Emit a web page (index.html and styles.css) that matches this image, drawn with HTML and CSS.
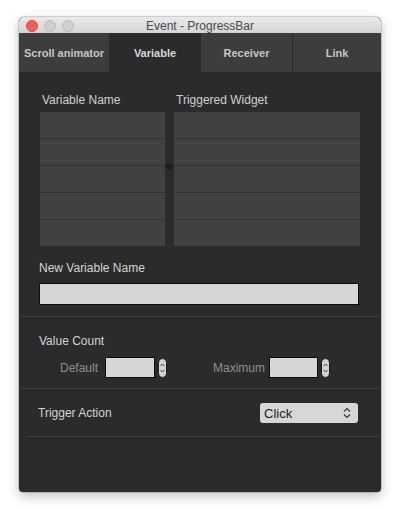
FILE: index.html
```html
<!DOCTYPE html>
<html>
<head>
<meta charset="utf-8">
<link rel="stylesheet" href="styles.css">
</head>
<body>
<div class="window">
  <div class="titlebar">
    <div class="lights">
      <span class="light light-close"></span>
      <span class="light"></span>
      <span class="light"></span>
    </div>
    <div class="title">Event - ProgressBar</div>
    <div></div>
  </div>
  <div class="tabs">
    <div class="tab">Scroll animator</div>
    <div class="tab tab-active">Variable</div>
    <div class="tab">Receiver</div>
    <div class="tab tab-link">Link</div>
  </div>
  <div class="panel">
    <div class="table-section">
      <div class="table">
        <div class="col">
          <div class="col-head">Variable Name</div>
          <div class="cells">
            <div class="cell"></div><div class="cell"></div><div class="cell"></div><div class="cell"></div><div class="cell"></div>
          </div>
        </div>
        <div class="col">
          <div class="col-head">Triggered Widget</div>
          <div class="cells">
            <div class="cell"></div><div class="cell"></div><div class="cell"></div><div class="cell"></div><div class="cell"></div>
          </div>
        </div>
        <span class="knob"></span>
      </div>
    </div>
    <div class="newvar-section">
      <div class="label">New Variable Name</div>
      <div class="text-input"></div>
    </div>
    <div class="value-section">
      <div class="label">Value Count</div>
      <div class="value-row">
        <span class="sub-label lbl-default">Default</span>
        <span class="num-input"></span>
        <svg class="stepper" viewBox="0 0 9 20" width="9" height="20"><rect x="0.5" y="0.5" width="8" height="19" rx="4" fill="#d2d2d2" stroke="#1a1a1a"/><path d="M2.5 8 L4.5 6 L6.5 8 M2.5 12 L4.5 14 L6.5 12" fill="none" stroke="#333" stroke-width="1"/></svg>
        <span class="sub-label lbl-max">Maximum</span>
        <span class="num-input num-input-max"></span>
        <svg class="stepper" viewBox="0 0 9 20" width="9" height="20"><rect x="0.5" y="0.5" width="8" height="19" rx="4" fill="#d2d2d2" stroke="#1a1a1a"/><path d="M2.5 8 L4.5 6 L6.5 8 M2.5 12 L4.5 14 L6.5 12" fill="none" stroke="#333" stroke-width="1"/></svg>
      </div>
    </div>
    <div class="trigger-section">
      <div class="label">Trigger Action</div>
      <div class="select">
        <span class="select-text">Click</span>
        <svg class="select-arrows" viewBox="0 0 8 12" width="8" height="12"><path d="M1 4.5 L4 1.5 L7 4.5 M1 7.5 L4 10.5 L7 7.5" fill="none" stroke="#333" stroke-width="1.1"/></svg>
      </div>
    </div>
  </div>
</div>
</body>
</html>
```
FILE: styles.css
```css
* { box-sizing: border-box; }
html, body { margin: 0; padding: 0; background: #ffffff; }
body {
  font-family: "Liberation Sans", Helvetica, Arial, sans-serif;
  width: 400px;
  height: 510px;
  overflow: hidden;
}
.window {
  margin: 17px 0 0 19px;
  width: 362px;
  height: 475px;
  background: #2b2b2b;
  border-radius: 5px 5px 4px 4px;
  box-shadow: 0 0 0 0.5px rgba(0,0,0,0.3), 0 4px 12px rgba(0,0,0,0.25);
  display: flex;
  flex-direction: column;
  overflow: hidden;
}
.titlebar {
  height: 16px;
  background: linear-gradient(#ebe9eb, #d6d4d6);
  display: grid;
  grid-template-columns: 1fr auto 1fr;
  align-items: center;
}
.lights {
  display: flex;
  gap: 6px;
  padding-left: 7px;
}
.light {
  width: 12px;
  height: 12px;
  border-radius: 50%;
  background: #d1d0d1;
  border: 0.5px solid #b9b8b9;
}
.light-close {
  background: #fc5f57;
  border-color: #de4841;
}
.title {
  font-size: 12px;
  line-height: 16px;
  color: #4a4a4a;
  padding-top: 1px;
}
.tabs {
  height: 39px;
  display: grid;
  grid-template-columns: 90px 92px 91px 1fr;
  background: #3d3d3d;
}
.tab {
  display: flex;
  align-items: center;
  justify-content: center;
  font-size: 11px;
  font-weight: bold;
  color: #c6c6c6;
  background: #3d3d3d;
}
.tab-active {
  background: #2b2b2b;
  color: #d9d9d9;
}
.tab-link {
  border-left: 1px solid #2c2c2c;
}
.panel {
  display: flex;
  flex-direction: column;
}
.table-section {
  padding: 20px 21px 0 21px;
}
.table {
  position: relative;
  display: grid;
  grid-template-columns: 125px 186px;
  column-gap: 9px;
}
.col-head {
  font-size: 12px;
  line-height: 16px;
  color: #cfd0d3;
  padding-left: 2px;
  margin-bottom: 4px;
}
.cells {
  display: flex;
  flex-direction: column;
  gap: 1px;
  background: #323232;
}
.cell {
  height: 26px;
  background: #414141;
}
.knob {
  position: absolute;
  left: 126px;
  top: 71px;
  width: 7px;
  height: 7px;
  border-radius: 50%;
  background: #1e1e1e;
}
.label {
  font-size: 12px;
  line-height: 16px;
  color: #d2d3d6;
}
.newvar-section {
  padding: 14px 22px 11px 20px;
  border-bottom: 1px solid #3c3c3c;
}
.text-input {
  margin-top: 7px;
  height: 22px;
  background: #d6d6d6;
  border: 1px solid #0d0d0d;
}
.value-section {
  padding: 16px 0 10px 20px;
  border-bottom: 1px solid #3c3c3c;
}
.value-row {
  margin-top: 8px;
  display: flex;
  align-items: center;
  padding-left: 21px;
  height: 21px;
}
.sub-label {
  font-size: 12px;
  color: #8e8e8e;
}
.lbl-default { margin-right: 7px; }
.lbl-max { margin-left: 46px; margin-right: 4px; }
.num-input {
  width: 50px;
  height: 21px;
  background: #d6d6d6;
  border: 1px solid #0d0d0d;
}
.num-input-max { width: 49px; }
.stepper {
  margin-left: 3px;
  display: block;
}
.trigger-section {
  margin-left: 6px;
  padding: 14px 23px 13px 13px;
  border-bottom: 1px solid #3c3c3c;
  display: flex;
  align-items: center;
  justify-content: space-between;
}
.select {
  width: 98px;
  height: 20px;
  background: #d7d7d7;
  border-radius: 3px;
  display: flex;
  align-items: center;
  justify-content: space-between;
  padding: 0 7px 0 4px;
}
.select-text {
  font-size: 13px;
  color: #1b1b1b;
}
.select-arrows { display: block; }
```
